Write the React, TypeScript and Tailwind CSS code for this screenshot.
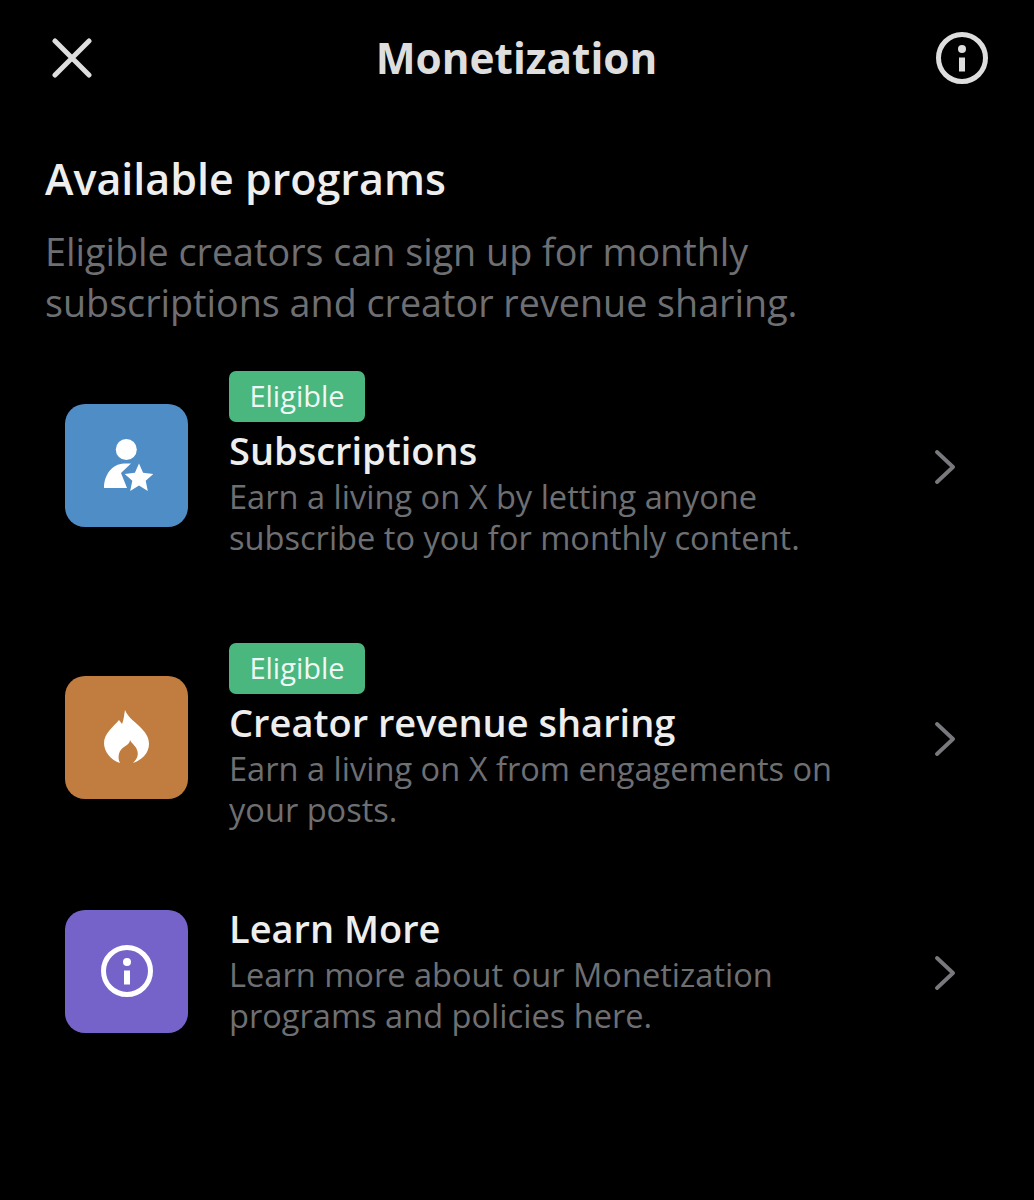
import type { ReactNode } from "react";

const font = "font-['Open_Sans','Noto_Sans',sans-serif]";

const UserStar = () => (
  <svg viewBox="0 0 50 52" className="ml-[5px] h-[52px] w-[50px]" fill="#fff">
    <circle cx="22.300" cy="10.500" r="10.500" />
    <path d="M0 49C0 36 8 25 20 24.500L27 24.500 17 34 23 49z" />
    <path d="M35 24.500L39.100 33.800 49.300 34.900 41.700 41.700 43.800 52 35 46.500 26.200 52 28.300 41.700 20.700 34.900 30.900 33.800z" />
  </svg>
);

const Flame = () => (
  <svg viewBox="0 0 45 54" className="h-[54px] w-[45px]" fill="#fff">
    <path d="M21 0C24 8 32 12 38 19 43 24 45 29 45 34 45 43 38 50 29 53 33 49 35 45 33 40 32 36 28 34 26 30 26 33 23 35 20 37 15 40 13 47 16 53 7 50 0 42 0 33 0 24 9 17 15 10L18 14C20 9 20 5 21 0z" />
  </svg>
);

const Info = ({ className, stroke }: { className: string; stroke: number }) => (
  <svg viewBox="0 0 52 52" className={className} fill="none" stroke="currentColor">
    <circle cx="26" cy="26" r={26 - stroke / 2} strokeWidth={stroke} />
    <circle cx="26" cy="17" r="4" fill="currentColor" stroke="none" />
    <rect x="23" y="25.500" width="6" height="14" fill="currentColor" stroke="none" />
  </svg>
);

const Chevron = () => (
  <svg viewBox="0 0 22 34" className="mt-[4px] h-[34px] w-[22px]" fill="none" stroke="#77797c" strokeWidth="3.800" strokeLinecap="round" strokeLinejoin="round">
    <path d="M3 2l16 15L3 32" />
  </svg>
);

const Eligible = () => (
  <span className="flex h-[51px] w-[136px] items-center justify-center rounded-[7px] bg-[#4ab77f] pb-[2px] text-[29px] leading-none text-[#f1f8f4]">
    Eligible
  </span>
);

interface ProgramProps {
  color: string;
  icon: ReactNode;
  title: string;
  lines: string[];
  eligible?: boolean;
  className: string;
}

const Program = ({ color, icon, title, lines, eligible, className }: ProgramProps) => (
  <div className={`flex items-center pl-[65px] pr-[78px] ${className}`}>
    <div className={`flex h-[123px] w-[123px] shrink-0 items-center justify-center rounded-[20px] ${color}`}>{icon}</div>
    <div className={`ml-[41px] flex-1 ${eligible ? "pb-[1px]" : "pt-[2px]"}`}>
      {eligible && <Eligible />}
      <h3 className={`text-[38px] font-semibold leading-[41px] text-[#eeeeee] ${eligible ? "mt-[8px]" : ""}`}>{title}</h3>
      <p className="mt-[5px] text-[32.600px] leading-[41px] text-[#6e6f72]">
        {lines.map((line) => (
          <span key={line} className="block whitespace-nowrap">{line}</span>
        ))}
      </p>
    </div>
    <Chevron />
  </div>
);

export default function App() {
  return (
    <div className={`h-[1200px] w-[1034px] overflow-hidden bg-black ${font}`}>
      <header className="flex items-center justify-between pl-[52px] pr-[46px] pt-[31px]">
        <svg viewBox="0 0 40 40" className="h-[40px] w-[40px]" fill="none" stroke="#dedede" strokeWidth="5" strokeLinecap="round">
          <path d="M3 3l34 34M37 3L3 37" />
        </svg>
        <h1 className="ml-[5px] text-[42.300px] font-bold leading-[54px] text-[#dedede]">Monetization</h1>
        <Info className="h-[52px] w-[52px] text-[#dedede]" stroke={5} />
      </header>

      <section className="px-[45px] pt-[66px]">
        <h2 className="text-[43px] font-semibold leading-[56px] text-[#eeeeee]">Available programs</h2>
        <p className="mt-[19px] text-[37.700px] leading-[51px] text-[#6e6f72]">
          <span className="block whitespace-nowrap">Eligible creators can sign up for monthly</span>
          <span className="block whitespace-nowrap">subscriptions and creator revenue sharing.</span>
        </p>
      </section>

      <Program
        className="mt-[43px]"
        color="bg-[#4f8dc6]"
        icon={<UserStar />}
        eligible
        title="Subscriptions"
        lines={["Earn a living on X by letting anyone", "subscribe to you for monthly content."]}
      />
      <Program
        className="mt-[84px]"
        color="bg-[#c17d3f]"
        icon={<Flame />}
        eligible
        title="Creator revenue sharing"
        lines={["Earn a living on X from engagements on", "your posts."]}
      />
      <Program
        className="mt-[75px]"
        color="bg-[#7663c9]"
        icon={<Info className="h-[52px] w-[52px] text-white" stroke={5} />}
        title="Learn More"
        lines={["Learn more about our Monetization", "programs and policies here."]}
      />
    </div>
  );
}
